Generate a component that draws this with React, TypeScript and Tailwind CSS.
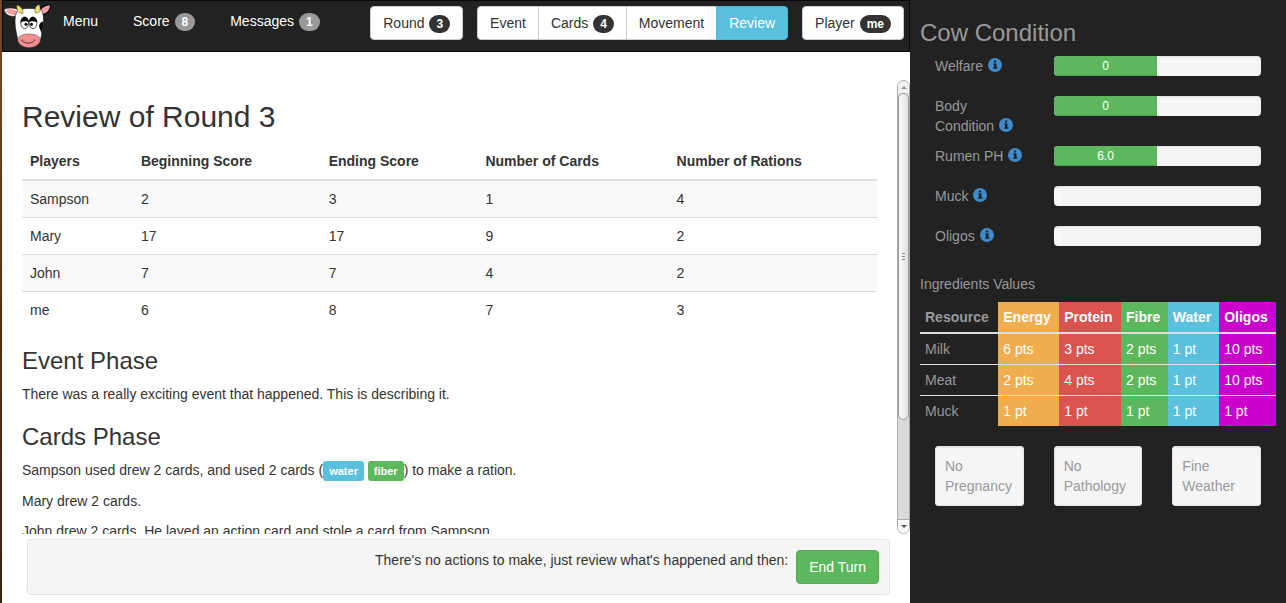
import React from "react";

const players = [
  ["Sampson", 2, 3, 1, 4],
  ["Mary", 17, 17, 9, 2],
  ["John", 7, 7, 4, 2],
  ["me", 6, 8, 7, 3],
];

const conditions = [
  { label: "Welfare", value: "0", percent: 50 },
  { label: "Body Condition", value: "0", percent: 50 },
  { label: "Rumen PH", value: "6.0", percent: 50 },
  { label: "Muck", value: "0", percent: 0 },
  { label: "Oligos", value: "0", percent: 0 },
];

const resourceColumns = [
  { name: "Resource", tone: "" },
  { name: "Energy", tone: "bg-[#f0ad4e] text-white" },
  { name: "Protein", tone: "bg-[#d9534f] text-white" },
  { name: "Fibre", tone: "bg-[#5cb85c] text-white" },
  { name: "Water", tone: "bg-[#5bc0de] text-white" },
  { name: "Oligos", tone: "bg-[#cc00cc] text-white" },
];

const resources = [
  ["Milk", "6 pts", "3 pts", "2 pts", "1 pt", "10 pts"],
  ["Meat", "2 pts", "4 pts", "2 pts", "1 pt", "10 pts"],
  ["Muck", "1 pt", "1 pt", "1 pt", "1 pt", "1 pt"],
];

function CowLogo() {
  return (
    <svg viewBox="4 3 48 46" className="h-[46px] w-12" role="img" aria-label="Cow">
      <path d="M19 10.500C15 7.500 8 7.500 4 9.500c1 5 6 8 13 6.500z" fill="#fff" stroke="#111" strokeWidth=".6" />
      <path d="M18 11.500C14 9 9 8.800 5.500 10.200c1.500 3.500 6 5.600 11 4.500z" fill="#f4a0a0" />
      <path d="M38 10c2-4 7-6.500 13.500-5.500C51 11 46 16 39 15.500z" fill="#0a0a0a" />
      <path d="M40 11c2-3.500 6-5.500 10-5.500-.500 5-4 8.500-9.500 8.500z" fill="#f4a0a0" />
      <path d="M18 10c4-2 19-2 23 0 2 2 2.500 6 2.500 11 0 6-1 9-2 14-1 8-5 12.500-12 12.500S18 43 17 36c-1-5-2-9-2-15 0-5 1-9 3-11z" fill="#fff" stroke="#111" strokeWidth=".6" />
      <path d="M43.300 21.500c-3 .500-4.800 3-4 6 .500 2 2 3 2 6.500 1.500-4 2.200-8 2-12.500z" fill="#0a0a0a" />
      <path d="M22 13.500c-4-.500-6-4.500-5-8.500 3.500 1 6 4 6 8z" fill="#f0df68" stroke="#494117" strokeWidth=".5" />
      <path d="M35.500 13c-1.500-4 .200-7 3.500-8.500 2 3.500 1.200 7-1 8.500z" fill="#f0df68" stroke="#494117" strokeWidth=".5" />
      <ellipse cx="24.700" cy="23" rx="3.900" ry="5.700" fill="#fff" stroke="#111" strokeWidth=".7" />
      <ellipse cx="33" cy="23" rx="3.900" ry="5.700" fill="#fff" stroke="#111" strokeWidth=".7" />
      <path d="M20.500 22.500c0-3.200 1.700-5.700 4.200-5.700s4 2.300 4 5.200c-2.500-1-5.500-.800-8.200.500z" fill="#0a0a0a" />
      <path d="M29 22c0-2.900 1.600-5.200 4-5.200s4.200 2.500 4.200 5.700c-2.700-1.300-5.700-1.500-8.200-.500z" fill="#0a0a0a" />
      <circle cx="26" cy="24.300" r="1.500" fill="#0a0a0a" />
      <circle cx="31.500" cy="24.300" r="1.500" fill="#0a0a0a" />
      <path d="M18 38.500C20 34.800 25 34 29 34s9.500 1 11 4.500c1.500 4.500-4 9-11 9s-12.500-4.500-11-9z" fill="#f08f8f" stroke="#6b3434" strokeWidth=".5" />
      <path d="M22 40.500c3 3.500 9.500 3.500 12.500 0M21.500 41l1-1.500M34 39.500l1.200 1.500" fill="none" stroke="#3b1717" strokeWidth=".8" />
    </svg>
  );
}

function InfoIcon() {
  return (
    <svg viewBox="0 0 14 14" className="ml-px inline-block size-[14px] align-[-1px]" aria-hidden="true">
      <path
        fillRule="evenodd"
        fill="#428bca"
        d="M7 0a7 7 0 1 1 0 14A7 7 0 0 1 7 0zM6 2.500v2h2.200v-2zM5 5.500v1h1V9.500H5v1.200h4.500V9.500h-1v-4z"
      />
    </svg>
  );
}

function Badge({ children, dark = false }: { children: React.ReactNode; dark?: boolean }) {
  return (
    <span
      className={`ml-px inline-block min-w-[10px] rounded-[10px] px-[7px] py-[3px] text-center align-baseline text-xs leading-3 font-bold text-white ${
        dark ? "bg-[#333]" : "bg-[#999]"
      }`}
    >
      {children}
    </span>
  );
}

const button = "border border-[#ccc] bg-white px-3 py-[6px] text-[#333] whitespace-nowrap";

function ScrollBar() {
  return (
    <div className="flex w-[13px] shrink-0 flex-col rounded-lg border border-[#aaa] bg-[#dcdad8]" aria-hidden="true">
      <div className="flex h-3 items-center justify-center rounded-t-lg bg-[#f3f2f1]">
        <svg viewBox="0 0 6 3" className="h-[3px] w-[6px]"><path d="M3 0l3 3H0z" fill="#999" /></svg>
      </div>
      <div className="flex h-[327px] flex-col items-center justify-center gap-[2px] rounded-lg border border-[#999] bg-linear-to-r from-[#fafafa] to-[#e4e2e0]">
        <span className="h-px w-[3px] bg-[#888]" />
        <span className="h-px w-[3px] bg-[#888]" />
        <span className="h-px w-[3px] bg-[#888]" />
      </div>
      <div className="grow" />
      <div className="flex h-[14px] items-center justify-center rounded-b-lg border-t border-[#aaa] bg-[#f8f8f7]">
        <svg viewBox="0 0 6 3" className="h-[3px] w-[6px]"><path d="M0 0h6L3 3z" fill="#555" /></svg>
      </div>
    </div>
  );
}

export default function App() {
  return (
    <div className="flex h-screen bg-white font-['Liberation_Sans',Arial,sans-serif] text-sm leading-5 text-[#333]">
      <div className="w-[2px] shrink-0 bg-linear-to-b from-[#7a4a22] via-[#5a3013] to-[#40200c]" />
      <main className="flex min-w-0 grow flex-col">
        <nav className="flex h-[52px] shrink-0 items-start border border-[#080808] bg-[#222] pr-[5px] text-white">
          <a href="#home" className="ml-px pt-[2px]"><CowLogo /></a>
          <div className="flex gap-[35px] pt-[10px] pl-[11px]">
            <a href="#menu">Menu</a>
            <a href="#score">Score <Badge>8</Badge></a>
            <a href="#messages">Messages <Badge>1</Badge></a>
          </div>
          <div className="ml-auto flex gap-[14px] pt-[5px]">
            <button className={`${button} rounded`}>Round <Badge dark>3</Badge></button>
            <div className="flex">
              <button className={`${button} rounded-l`}>Event</button>
              <button className={`${button} -ml-px`}>Cards <Badge dark>4</Badge></button>
              <button className={`${button} -ml-px`}>Movement</button>
              <button className="-ml-px rounded-r border border-[#46b8da] bg-[#5bc0de] px-3 py-[6px] text-white">Review</button>
            </div>
            <button className={`${button} rounded`}>Player <Badge dark>me</Badge></button>
          </div>
        </nav>

        <div className="mt-7 flex min-h-0 grow">
          <section className="min-w-0 grow overflow-y-auto px-5 [scrollbar-width:none]">
            <h2 className="mt-5 mb-[10px] text-[30px] leading-[33px]">Review of Round 3</h2>
            <table className="mb-5 w-full text-left">
              <thead>
                <tr>
                  {["Players", "Beginning Score", "Ending Score", "Number of Cards", "Number of Rations"].map((name) => (
                    <th key={name} className="border-b-2 border-[#ddd] p-2 font-bold">{name}</th>
                  ))}
                </tr>
              </thead>
              <tbody>
                {players.map((row) => (
                  <tr key={row[0]} className="border-t border-[#ddd] odd:bg-[#f9f9f9]">
                    {row.map((cell, i) => <td key={i} className="p-2">{cell}</td>)}
                  </tr>
                ))}
              </tbody>
            </table>
            <h3 className="mb-[10px] text-2xl leading-[26px]">Event Phase</h3>
            <p>There was a really exciting event that happened. This is describing it.</p>
            <h3 className="mt-5 mb-[10px] text-2xl leading-[26px]">Cards Phase</h3>
            <p className="mb-[10px]">
              Sampson used drew 2 cards, and used 2 cards (
              <span className="rounded-[3px] bg-[#5bc0de] px-[6px] py-1 text-[11px] font-bold text-white">water</span>{" "}
              <span className="rounded-[3px] bg-[#5cb85c] px-[6px] py-1 text-[11px] font-bold text-white">fiber</span>
              ) to make a ration.
            </p>
            <p className="mb-[10px]">Mary drew 2 cards.</p>
            <p>John drew 2 cards. He layed an action card and stole a card from Sampson.</p>
          </section>
          <ScrollBar />
        </div>

        <footer className="mt-[5px] mr-5 mb-2 ml-[25px] flex shrink-0 items-start justify-end gap-2 rounded border border-[#e3e3e3] bg-[#f5f5f5] p-[10px]">
          <p>There's no actions to make, just review what's happened and then:</p>
          <button className="rounded border border-[#4cae4c] bg-[#5cb85c] px-3 py-[6px] text-white">End Turn</button>
        </footer>
      </main>

      <aside className="w-[376px] shrink-0 overflow-hidden bg-[#222] px-[10px] pt-5 text-[#999]">
        <h3 className="mb-[10px] text-2xl leading-[26px]">Cow Condition</h3>
        {conditions.map(({ label, value, percent }) => (
          <div key={label} className="flex">
            <p className="mb-[10px] w-1/3 px-[15px]">{label} <InfoIcon /></p>
            <div className="mb-5 w-2/3 px-[15px]">
              <div
                role="progressbar"
                aria-label={label}
                aria-valuenow={percent}
                className="h-5 overflow-hidden rounded bg-[#f5f5f5] text-xs leading-5 text-white shadow-[inset_0_1px_2px_rgba(0,0,0,0.1)]"
              >
                <div
                  className="h-full bg-[#5cb85c] text-center shadow-[inset_0_-1px_0_rgba(0,0,0,0.15)]"
                  style={{ width: `${percent}%` }}
                >
                  {value}
                </div>
              </div>
            </div>
          </div>
        ))}
        <table className="mb-5 w-full text-left">
          <caption className="py-2 text-left">Ingredients Values</caption>
          <thead>
            <tr>
              {resourceColumns.map(({ name, tone }) => (
                <th key={name} className={`border-b-2 border-[#ddd] p-[5px] font-bold ${tone}`}>{name}</th>
              ))}
            </tr>
          </thead>
          <tbody>
            {resources.map((row) => (
              <tr key={row[0]} className="border-t border-[#ddd]">
                {row.map((cell, i) => (
                  <td key={i} className={`p-[5px] ${resourceColumns[i].tone}`}>{cell}</td>
                ))}
              </tr>
            ))}
          </tbody>
        </table>
        <div className="grid grid-cols-3">
          {["No Pregnancy", "No Pathology", "Fine Weather"].map((state) => (
            <div key={state} className="px-[15px]">
              <div className="rounded-[3px] border border-[#e3e3e3] bg-[#f5f5f5] p-[9px] shadow-[inset_0_1px_1px_rgba(0,0,0,0.05)]">{state}</div>
            </div>
          ))}
        </div>
      </aside>
    </div>
  );
}
